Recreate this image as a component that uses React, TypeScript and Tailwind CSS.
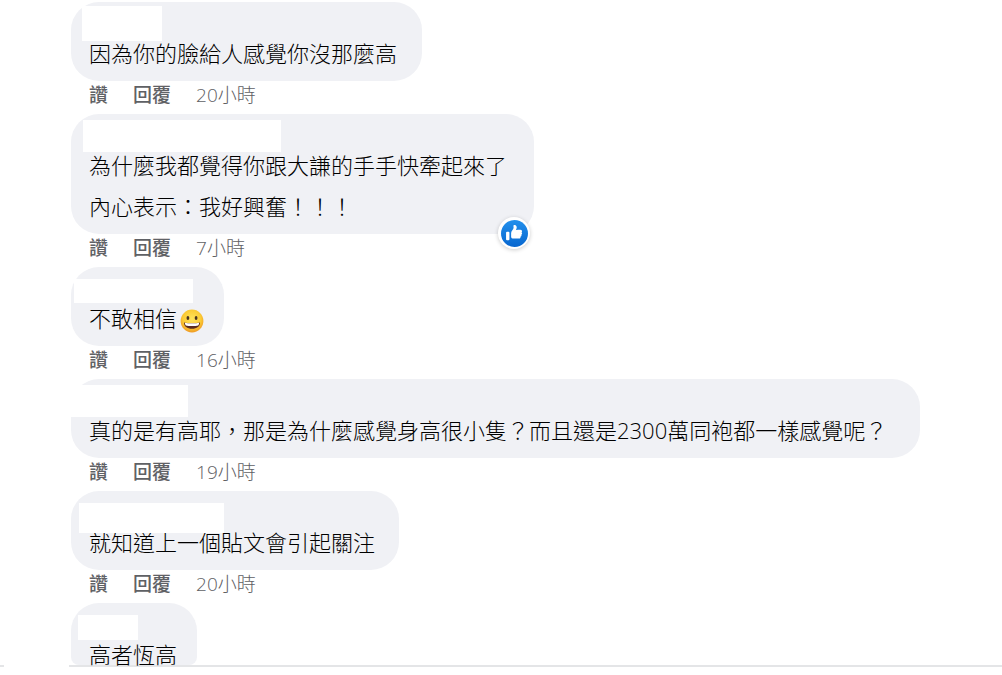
import React from 'react';

type Comment = {
  id: number;
  lines: string[];
  age?: string;
  size: string;
  mask: string;
  emoji?: boolean;
  liked?: boolean;
};

const comments: Comment[] = [
  { id: 1, lines: ['因為你的臉給人感覺你沒那麼高'], age: '20小時', size: 'min-w-[351px]', mask: 'left-[11px] top-1 h-[35px] w-20' },
  {
    id: 2,
    lines: ['為什麼我都覺得你跟大謙的手手快牽起來了', '內心表示：我好興奮！！！'],
    age: '7小時',
    size: 'min-w-[463px]',
    mask: 'left-3 top-1.5 h-8 w-[198px]',
    liked: true,
  },
  { id: 3, lines: ['不敢相信'], age: '16小時', size: 'min-w-[153px]', mask: 'left-[3px] top-3 h-6 w-[119px]', emoji: true },
  {
    id: 4,
    lines: ['真的是有高耶，那是為什麼感覺身高很小隻？而且還是2300萬同袍都一樣感覺呢？'],
    age: '19小時',
    size: 'min-w-[849px]',
    mask: 'left-0 top-1.5 h-8 w-[117px]',
  },
  { id: 5, lines: ['就知道上一個貼文會引起關注'], age: '20小時', size: 'min-w-[328px]', mask: 'left-2 top-3 h-[30px] w-[145px]' },
  { id: 6, lines: ['高者恆高'], size: 'min-w-[126px]', mask: 'left-[7px] top-3 h-[25px] w-[60px]' },
];

function Grin() {
  return (
    <svg viewBox="0 0 24 24" className="ml-[3px] inline-block size-6 align-middle" role="img" aria-label="😀">
      <defs>
        <radialGradient id="face" cx="50%" cy="40%" r="60%">
          <stop offset="0" stopColor="#ffe45c" />
          <stop offset="0.65" stopColor="#fbcb35" />
          <stop offset="1" stopColor="#ef9a24" />
        </radialGradient>
      </defs>
      <circle cx="12" cy="12" r="11.4" fill="url(#face)" />
      <ellipse cx="7.9" cy="9" rx="1.4" ry="1.9" fill="#4a3420" />
      <ellipse cx="16.1" cy="9" rx="1.4" ry="1.9" fill="#4a3420" />
      <path d="M4 13.400c2.400.8 13.600.8 16 0 .2 3.800-3.200 6.300-8 6.300s-8.200-2.500-8-6.300z" fill="#5b2b20" />
      <path d="M4.800 13.700c3 .7 11.400.7 14.400 0-.1 1.300-.5 2.200-1 2.700-3 .7-9.400.7-12.400 0-.6-.6-.9-1.500-1-2.700z" fill="#fff" />
    </svg>
  );
}

function LikeBadge() {
  return (
    <span className="absolute -bottom-[15px] right-1 flex size-8 items-center justify-center rounded-full bg-white shadow-[0_1px_4px_rgba(0,0,0,0.2)]">
      <svg viewBox="0 0 16 16" className="size-[27px]" role="img" aria-label="讚">
        <defs>
          <linearGradient id="like" x1="0" y1="0" x2="0" y2="1">
            <stop offset="0" stopColor="#2390ec" />
            <stop offset="1" stopColor="#0766cf" />
          </linearGradient>
        </defs>
        <circle cx="8" cy="8" r="8" fill="url(#like)" />
        <path
          d="M12.162 7.338c.176.123.338.245.338.674 0 .43-.229.604-.474.725.1.163.132.36.089.546-.077.344-.392.611-.672.69.121.194.159.385.015.62-.185.295-.346.407-1.058.407H7.500c-.988 0-1.500-.546-1.500-1V7.665c0-1.230 1.467-2.275 1.467-3.130L7.361 3.470c-.005-.065.008-.224.058-.270.080-.079.301-.200.635-.200.218 0 .363.041.534.123.581.277.732.978.732 1.542 0 .271-.414 1.083-.470 1.364 0 0 .867-.192 1.879-.199 1.061-.006 1.749.190 1.749.842 0 .261-.219.523-.316.666zM3.600 7h.800a.600.600 0 0 1 .600.600v3.800a.600.600 0 0 1-.600.600h-.800a.600.600 0 0 1-.600-.600V7.600a.600.600 0 0 1 .600-.600z"
          fill="#fff"
        />
      </svg>
    </span>
  );
}

function CommentItem({ comment }: { comment: Comment }) {
  const shape = comment.age
    ? 'rounded-[28px] pb-[7px] pt-[31px] leading-[41px]'
    : 'rounded-t-[28px] rounded-b-lg pt-10 leading-[22px]';
  return (
    <li className="flex flex-col items-start">
      <div className={`relative bg-[#f0f1f5] px-[18px] text-[22px] font-light text-black ${shape} ${comment.size}`}>
        {comment.lines.map((line) => (
          <p key={line}>
            {line}
            {comment.emoji && <Grin />}
          </p>
        ))}
        <span className={`absolute bg-white ${comment.mask}`} />
        {comment.liked && <LikeBadge />}
      </div>
      {comment.age && (
        <div className="mb-[5px] flex gap-[25px] pl-[18px] text-[19px] leading-7 text-[#5f6165]">
          <button type="button" className="font-medium">讚</button>
          <button type="button" className="font-medium">回覆</button>
          <a href="#comment" className="font-light">{comment.age}</a>
        </div>
      )}
    </li>
  );
}

export default function App() {
  return (
    <main className="bg-white pb-2 font-['Open_Sans','Noto_Sans_CJK_TC',sans-serif]" lang="zh-Hant">
      <ul className="pl-[71px] pt-0.5">
        {comments.map((comment) => (
          <CommentItem key={comment.id} comment={comment} />
        ))}
      </ul>
      <div className="flex gap-[65px]">
        <span className="h-0.5 w-1 bg-[#e4e5e7]" />
        <span className="h-0.5 flex-1 bg-[#e4e5e7]" />
      </div>
    </main>
  );
}
